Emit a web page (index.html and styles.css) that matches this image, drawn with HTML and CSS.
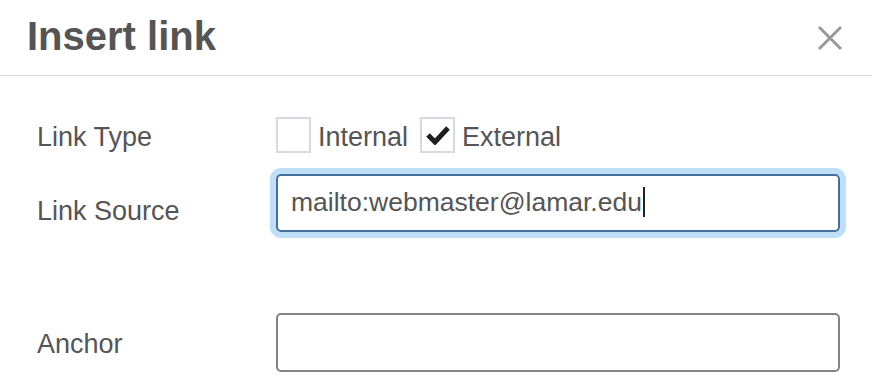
FILE: index.html
```html
<!DOCTYPE html>
<html lang="en">
<head>
  <meta charset="UTF-8">
  <meta name="viewport" content="width=device-width, initial-scale=1.0">
  <title>Insert link</title>
  <link rel="stylesheet" href="styles.css">
</head>
<body>

<div class="dialog">
  <!-- Header -->
  <div class="dialog-header">
    <h1>Insert link</h1>
    <button class="close" type="button" aria-label="Close">
      <svg width="26" height="26" viewBox="0 0 26 26">
        <path d="M2 2 L24 24 M24 2 L2 24" stroke="#999" stroke-width="3" fill="none"/>
      </svg>
    </button>
  </div>

  <!-- Form rows -->
  <div class="dialog-body">
    <div class="row row-type">
      <label class="row-label">Link Type</label>
      <div class="choices">
        <span class="check"></span>
        <span class="choice-text">Internal</span>
        <span class="check checked">
          <svg width="26" height="20" viewBox="0 0 26 20">
            <path d="M3 10 L10 17 L23 3" stroke="#1e1e1e" stroke-width="5" fill="none"/>
          </svg>
        </span>
        <span class="choice-text">External</span>
      </div>
    </div>

    <div class="row row-source">
      <label class="row-label">Link Source</label>
      <div class="field focused">mailto:webmaster@lamar.edu<span class="caret"></span></div>
    </div>

    <div class="row row-anchor">
      <label class="row-label">Anchor</label>
      <div class="field"></div>
    </div>
  </div>
</div>

</body>
</html>
```

FILE: styles.css
```css
body {
  margin: 0;
  background-color: #fff;
  color: #555;
  font-family: "Liberation Sans", Arial, sans-serif;
}
.dialog-header {
  height: 75px;
  border-bottom: 1px solid #d9dbe4;
  display: flex;
  align-items: center;
  justify-content: space-between;
  padding: 0 29px 0 27px;
}
h1 {
  margin: 0;
  font-size: 40px;
  font-weight: bold;
  color: #555;
  padding-bottom: 2px;
}
.close {
  background: none;
  border: none;
  padding: 0;
  display: flex;
}
.dialog-body {
  padding-top: 41px;
}
.row {
  display: flex;
  align-items: center;
  font-size: 27px;
}
.row-label {
  width: 239px;
  padding-left: 37px;
  flex-shrink: 0;
}
.row-type {
  height: 36px;
}
.row-type .row-label,
.choice-text {
  padding-top: 4px;
}
.row-source {
  margin-top: 21px;
}
.row-source .row-label {
  padding-top: 16px;
}
.row-anchor {
  margin-top: 81px;
}
.row-anchor .row-label {
  padding-top: 4px;
}
.choices {
  display: flex;
  align-items: center;
}
.check {
  width: 31px;
  height: 32px;
  border: 2px solid #d3dae3;
  display: flex;
  align-items: center;
  justify-content: center;
}
.choice-text {
  margin: 0 12px 0 7px;
}
.field {
  border: 2px solid #838383;
  border-radius: 5px;
  display: flex;
  align-items: center;
  padding-left: 13px;
  box-sizing: border-box;
  width: 564px;
  height: 59px;
}
.field.focused {
  height: 58px;
  font-size: 26.5px;
  border-color: #44709d;
  box-shadow: 0 0 0 6px #bfdff9;
  padding-bottom: 2px;
}
.caret {
  display: inline-block;
  width: 2px;
  height: 30px;
  background-color: #222;
  margin-left: 1px;
}
```
